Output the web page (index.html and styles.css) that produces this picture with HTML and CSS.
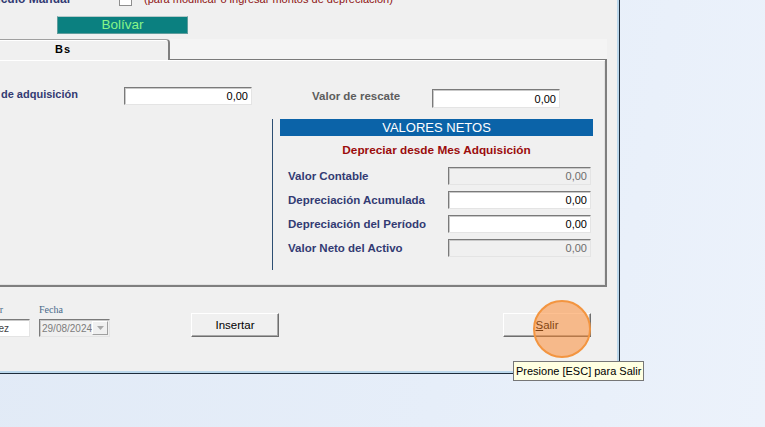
FILE: index.html
```html
<!DOCTYPE html>
<html lang="es">
<head>
    <meta charset="UTF-8">
    <title>Depreciación de activos</title>
    <link rel="stylesheet" href="styles.css">
</head>
<body>
<div class="window">
    <div class="manual-row">
        <div class="clip-left manual-label"><span>Cálculo Manual</span></div>
        <span class="check"></span>
        <span class="manual-note">(para modificar o ingresar montos de depreciación)</span>
    </div>

    <div class="currency">Bolívar</div>

    <div class="tabs">
        <div class="tab-strip">
            <div class="tab">Bs</div>
            <div class="tab-fill"></div>
        </div>
        <div class="tab-panel">
            <div class="cost-row">
                <div class="clip-left label adq-label"><span>Valor de adquisición</span></div>
                <input class="field adq-field" value="0,00">
                <div class="label rescate-label">Valor de rescate</div>
                <input class="field rescate-field" value="0,00">
            </div>

            <div class="netos">
                <div class="netos-title">VALORES NETOS</div>
                <div class="netos-mode">Depreciar desde Mes Adquisición</div>
                <div class="netos-row">
                    <span class="label">Valor Contable</span>
                    <input class="field disabled" value="0,00" disabled>
                </div>
                <div class="netos-row">
                    <span class="label">Depreciación Acumulada</span>
                    <input class="field" value="0,00">
                </div>
                <div class="netos-row">
                    <span class="label">Depreciación del Período</span>
                    <input class="field" value="0,00">
                </div>
                <div class="netos-row">
                    <span class="label">Valor Neto del Activo</span>
                    <input class="field disabled" value="0,00" disabled>
                </div>
            </div>
        </div>
    </div>

    <div class="footer">
        <div class="group user-group">
            <div class="clip-left tiny-label user-label"><span>Autor</span></div>
            <input class="field user-field" value="Pérez">
        </div>
        <div class="group date-group">
            <div class="tiny-label">Fecha</div>
            <div class="combo">
                <span class="combo-value">29/08/2024</span>
                <span class="combo-btn">
                    <svg width="7" height="4" viewBox="0 0 7 4"><path d="M0 0h7L3.5 4z" fill="#a8a8a8"/></svg>
                </span>
            </div>
        </div>
        <button class="btn insert-btn">Insertar</button>
        <div class="salir-wrap">
            <button class="btn"><u>S</u>alir</button>
            <span class="click-ring"></span>
            <span class="tooltip">Presione [ESC] para Salir</span>
        </div>
    </div>
</div>
</body>
</html>
```

FILE: styles.css
```css
* {
    box-sizing: border-box;
}
body {
    margin: 0;
    height: 427px;
    overflow: hidden;
    background: linear-gradient(100deg, #e1eaf6 0%, #e6eef9 60%, #ecf2fb 100%);
    font-family: 'Liberation Sans', Arial, sans-serif;
}

.window {
    width: 620px; height: 382px; margin-top: -8px;
    background: #f0f0f0;
    border-right: 1px solid #1d2c3b; border-bottom: 1px solid #1d2c3b;
    box-shadow: inset -2px -2px 0 #bcd8ec;
}

/* text that runs off the left edge: zero-width box, content pushed left */
.clip-left { display: flex; justify-content: flex-end; white-space: nowrap; }

.manual-row { display: flex; align-items: flex-end; height: 14px; }
.manual-label { width: 70px; font-size: 12px; font-weight: bold; color: #333b73; line-height: 14px; }
.check {
    width: 13px; height: 13px; margin-left: 49px; background: #fff;
    border: 1px solid #8e8e8e;
}
.manual-note { margin-left: 12px; font-size: 11px; color: #8e1212; line-height: 14px; }

.currency {
    width: 131px; height: 18px; margin: 10px 0 0 57px;
    background: #0b8080; border: 1px solid #5f9c9c; border-top-color: #b5c9c9;
    color: #88f588; font-size: 13.5px; line-height: 16px; text-align: center;
}

.tabs { margin-top: 5px; }
.tab-strip { display: flex; height: 21px; }
.tab {
    width: 170px; padding-left: 55px;
    border-top: 1px solid #a0a0a0; border-right: 2px solid #7f7f7f;
    border-top-right-radius: 4px;
    box-shadow: inset 0 1px 0 #fff;
    font-size: 11px; font-weight: bold; line-height: 19px; letter-spacing: 1px;
}
.tab-fill {
    width: 437px; background: #f4f4f4;
    border-bottom: 1px solid #7a7a7a;
}

.tab-panel {
    width: 607px; height: 227px;
    border-right: 2px solid #7f7f7f; border-bottom: 2px solid #7f7f7f;
    box-shadow: inset 0 1px 0 #fff, inset -1px -1px 0 #e2e2e2;
}

.label { font-size: 11.5px; font-weight: bold; color: #333b73; line-height: 14px; white-space: nowrap; }

.field {
    height: 18px; padding: 0 3px 0 2px;
    background: #fff; color: #000;
    border: 1px solid; border-color: #7a7a7a #e4e4e4 #e4e4e4 #7a7a7a;
    box-shadow: inset 1px 1px 0 #c9c9c9;
    font-family: 'Liberation Sans', Arial, sans-serif; font-size: 11px;
    text-align: right; outline: none;
}
.field.disabled { background: #f0f0f0; color: #6d6d6d; }

.cost-row { display: flex; align-items: flex-start; padding-top: 27px; }
.adq-label { width: 78px; font-size: 11px; }
.adq-field { width: 128px; margin-left: 46px; }
.rescate-label { width: 120px; margin: 2px 0 0 60px; color: #5d5d5d; }
.rescate-field { width: 128px; height: 19px; margin-top: 2px; }

.netos {
    width: 322px; margin: 11px 0 0 272px; padding: 0 0 13px 7px;
    border-left: 1px solid #2d4e73;
}
.netos-title {
    width: 313px; height: 17px; background: #0b63a8;
    color: #fff; font-size: 13px; line-height: 17px; text-align: center;
}
.netos-mode {
    width: 313px; margin-top: 7px;
    font-size: 11.8px; font-weight: bold; color: #9b0c0c; line-height: 14px; text-align: center;
}
.netos-row { display: flex; align-items: center; height: 18px; margin-top: 6px; }
.netos-mode + .netos-row { margin-top: 10px; }
.netos-row .label { width: 168px; padding-left: 8px; }
.netos-row .field { width: 143px; }

.footer { display: flex; align-items: flex-end; height: 50px; }
.group { display: flex; flex-direction: column; }
.tiny-label { font-family: 'Liberation Serif', 'DejaVu Serif', serif; font-size: 10px; color: #48698a; line-height: 12px; margin-bottom: 3px; }
.user-group { width: 30px; }
.user-label { width: 3px; }
.user-field { width: 50px; margin-left: -20px; text-align: left; font-size: 10px; color: #444; }
.date-group { margin-left: 9px; }
.combo {
    display: flex; align-items: center; width: 71px; height: 18px;
    border: 1px solid; border-color: #7a7a7a #e4e4e4 #e4e4e4 #7a7a7a;
    box-shadow: inset 1px 1px 0 #c9c9c9;
}
.combo-value { flex: 1; padding-left: 2px; font-size: 10px; color: #7c7c7c; }
.combo-btn {
    display: flex; align-items: center; justify-content: center;
    width: 16px; height: 14px; margin-right: 1px;
    border: 1px solid; border-color: #fff #a0a0a0 #a0a0a0 #fff;
}

.btn {
    width: 88px; height: 24px; padding: 0;
    background: #f0f0f0; color: #000;
    border: 1px solid; border-color: #fff #6e6e6e #6e6e6e #fff;
    box-shadow: inset -1px -1px 0 #a8a8a8;
    font-family: 'Liberation Sans', Arial, sans-serif; font-size: 11.5px; font-weight: normal;
}
.insert-btn { margin-left: 81px; }

.salir-wrap { position: relative; margin-left: 224px; height: 24px; }
.click-ring {
    position: absolute; left: 30px; top: -13px;
    width: 58px; height: 58px; border-radius: 50%;
    background: rgba(252, 130, 36, 0.5); border: 2px solid #f39540;
}
.tooltip {
    position: absolute; left: 10px; top: 48px;
    padding: 0 2px; height: 20px;
    background: #ffffe1; border: 1px solid #767676;
    font-size: 11px; line-height: 18px; white-space: nowrap; color: #000;
}
```
